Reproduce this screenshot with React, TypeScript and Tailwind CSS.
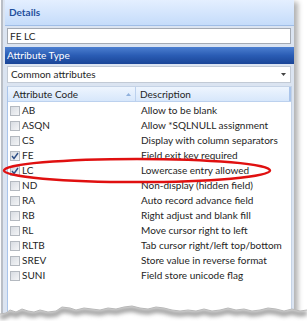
const rows = [
  { code: "AB", desc: "Allow to be blank", checked: false },
  { code: "ASQN", desc: "Allow *SQLNULL assignment", checked: false },
  { code: "CS", desc: "Display with column separators", checked: false },
  { code: "FE", desc: "Field exit key required", checked: true },
  { code: "LC", desc: "Lowercase entry allowed", checked: true },
  { code: "ND", desc: "Non-display (hidden field)", checked: false },
  { code: "RA", desc: "Auto record advance field", checked: false },
  { code: "RB", desc: "Right adjust and blank fill", checked: false },
  { code: "RL", desc: "Move cursor right to left", checked: false },
  { code: "RLTB", desc: "Tab cursor right/left top/bottom", checked: false },
  { code: "SREV", desc: "Store value in reverse format", checked: false },
  { code: "SUNI", desc: "Field store unicode flag", checked: false },
];

const edge =
  "M0 16 L6 15 L10 12 L16 14 L22 11 L28 13 L34 14 L40 12 L48 14 L56 13 L62 9 L70 10 L76 12 L84 10 L92 11 L100 12 L108 10 L116 11 L124 9 L132 8 L140 10 L148 11 L156 9 L164 10 L172 12 L180 13 L188 12 L196 13 L204 11 L212 13 L220 12 L228 10 L236 12 L244 11 L252 13 L260 12 L268 10 L276 11 L284 13 L292 11 L300 13 L307 12";

const edgeShadow =
  "M0 19 L6 18 L10 15 L16 17 L22 14 L28 16 L34 17 L40 15 L48 17 L56 16 L62 12 L70 13 L76 15 L84 13 L92 14 L100 15 L108 13 L116 14 L124 12 L132 11 L140 13 L148 14 L156 12 L164 13 L172 15 L180 16 L188 15 L196 16 L204 14 L212 16 L220 15 L228 13 L236 15 L244 14 L252 16 L260 15 L268 13 L276 14 L284 16 L292 14 L300 16 L307 15";

const CheckBox = ({ checked }: { checked: boolean }) => (
  <div className="w-[10px] h-[10px] border border-[#b4b9c0] bg-gradient-to-br from-[#d8dce2] to-[#f4f5f7] flex items-center justify-center">
    {checked && (
      <svg width="8" height="8" viewBox="0 0 8 8">
        <path d="M1 4 L3 6.5 L7 1" stroke="#2e4f86" strokeWidth="1.4" fill="none" />
      </svg>
    )}
  </div>
);

export default function App() {
  return (
    <div
      className="relative w-[307px] h-[330px] bg-white overflow-hidden text-[10px] text-[#1e1e1e]"
      style={{ fontFamily: 'Lato, "Noto Sans", sans-serif' }}
    >
      <div className="ml-[1px] w-[293px] h-[322px] bg-[#dbe4f1] border-l-[2px] border-[#b9bec6] shadow-[4px_2px_5px_rgba(0,0,0,0.3)] flex flex-col pl-[2px]">
        {/* header */}
        <div className="h-[26px] bg-gradient-to-b from-[#e4efff] to-[#c5dcfa] border-b border-[#9fbde6] flex items-center pl-[4px]">
          <span className="font-bold text-[10px] text-[#1f4f9c]">Details</span>
        </div>
        <div className="px-[2px] pt-[2px]">
          <div className="h-[16px] bg-white border border-[#a4aab3] flex items-center pl-[2px] w-[284px]">
            FE LC
          </div>
        </div>
        <div className="mt-[3px] h-[17px] w-[289px] bg-gradient-to-b from-[#4c7fd0] via-[#2a5cb4] to-[#1a4597] text-white flex items-center pl-[2px]">
          Attribute Type
        </div>
        <div className="px-[2px] pt-[2px]">
          <div className="h-[17px] w-[284px] bg-white border border-[#c2cad5] flex items-center pl-[3px] justify-between pr-[4px]">
            <span>Common attributes</span>
            <svg width="5" height="3" viewBox="0 0 5 3">
              <path d="M0 0 L5 0 L2.5 3 Z" fill="#444" />
            </svg>
          </div>
        </div>
        <div className="mt-[3px] ml-[2px] w-[285px] flex-1 bg-white border border-[#c5d3e6] border-l-[#a9c4ea] flex flex-col">
          <div className="h-[15px] flex bg-gradient-to-b from-[#eef5fe] to-[#d7e7fb] border-b border-[#bcd1ee]">
            <div className="w-[128px] flex items-center justify-between pl-[5px] pr-[4px] border-r border-[#bcd1ee]">
              <span>Attribute Code</span>
              <svg width="5" height="3" viewBox="0 0 5 3">
                <path d="M0 3 L5 3 L2.5 0 Z" fill="#8fb0dc" />
              </svg>
            </div>
            <div className="flex-1 flex items-center pl-[4px] border-r-[2px] border-[#a9c4ea]">Description</div>
          </div>
          <div className="pt-[1px]">
            {rows.map((r) => (
              <div key={r.code} className="h-[15px] flex items-center">
                <div className="w-[128px] flex items-center pl-[2px] gap-[2px]">
                  <CheckBox checked={r.checked} />
                  <span>{r.code}</span>
                </div>
                <span className="pl-[5px]">{r.desc}</span>
              </div>
            ))}
          </div>
        </div>
      </div>

      {/* highlight ellipse */}
      <svg className="absolute left-0 top-[156px]" width="275" height="30" viewBox="0 0 275 30">
        <ellipse cx="137" cy="14.5" rx="133" ry="11.5" stroke="#e01010" strokeWidth="2.5" fill="none" />
      </svg>

      {/* torn bottom edge */}
      <svg className="absolute left-0 top-[298px]" width="307" height="32" viewBox="0 0 307 32">
        <defs>
          <filter id="blur" x="-10%" y="-50%" width="120%" height="200%">
            <feGaussianBlur stdDeviation="2" />
          </filter>
          <clipPath id="below">
            <path d={edge + " L307 32 L0 32 Z"} />
          </clipPath>
        </defs>
        <path d={edge + " L307 32 L0 32 Z"} fill="#ffffff" />
        <g clipPath="url(#below)">
          <path d={edgeShadow} stroke="#9a9a9a" strokeWidth="5" fill="none" filter="url(#blur)" />
        </g>
        <path d={edge} stroke="#b8b8b8" strokeWidth="1" fill="none" />
      </svg>
    </div>
  );
}
